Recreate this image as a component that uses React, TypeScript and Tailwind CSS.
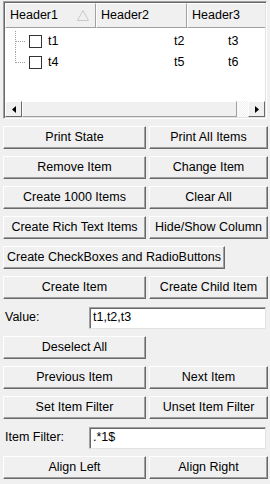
import React from 'react';

const font = { fontFamily: '"Liberation Sans", Arial, sans-serif' };

function Btn({ label, className = '' }: { label: string; className?: string }) {
  return (
    <button
      className={`h-[23px] bg-[#f0f0f0] text-[12.5px] text-black border border-t-white border-l-white border-r-[#696969] border-b-[#696969] shadow-[inset_-1px_-1px_0_#a0a0a0] flex items-center justify-center whitespace-nowrap ${className}`}
    >
      {label}
    </button>
  );
}

function Row({ left, right }: { left: string; right: string }) {
  return (
    <div className="flex gap-[3px]">
      <Btn label={left} className="w-[143px]" />
      <Btn label={right} className="w-[119px]" />
    </div>
  );
}

function Field({ label, value }: { label: string; value: string }) {
  return (
    <div className="flex items-center h-[23px]">
      <span className="w-[86px] pl-[2px] text-[12.5px] text-black">{label}</span>
      <div className="w-[177px] h-[22px] bg-white border border-t-[#a0a0a0] border-l-[#a0a0a0] border-r-[#e3e3e3] border-b-[#e3e3e3] shadow-[inset_1px_1px_0_#696969] flex items-center pl-[3px] text-[12.5px] text-black">
        {value}
      </div>
    </div>
  );
}

function TreeRow({ a, b, c, last }: { a: string; b: string; c: string; last?: boolean }) {
  return (
    <div className="relative flex items-center h-[21px]">
      {/* tree connector */}
      <div
        className={`absolute left-[10px] top-0 w-0 border-l border-dotted border-[#a0a0a0] ${last ? 'h-[11px]' : 'h-[21px]'}`}
      />
      <div className="absolute left-[11px] top-[10px] w-[9px] border-t border-dotted border-[#a0a0a0]" />
      <div className="ml-[24px] w-[13px] h-[13px] border border-[#333] bg-white" />
      <span className="ml-[6px] w-[126px]">{a}</span>
      <span className="w-[54px]">{b}</span>
      <span>{c}</span>
    </div>
  );
}

function Tree() {
  return (
    <div className="ml-[3px] w-[264px] h-[118px] bg-white border border-t-[#a0a0a0] border-l-[#a0a0a0] border-r-white border-b-white shadow-[inset_1px_1px_0_#696969,inset_-1px_-1px_0_#e3e3e3] flex flex-col p-[1px] text-[12.5px] text-black">
      <div className="flex h-[25px] bg-[#f0f0f0] shrink-0">
        <div className="w-[91px] flex items-center justify-between pl-[4px] pr-[6px] border-t border-l border-t-white border-l-white border-r border-b border-r-[#a0a0a0] border-b-[#a0a0a0]">
          <span>Header1</span>
          <svg width="12" height="11" viewBox="0 0 12 11">
            <path d="M0.5 10.5 L6 0.5 L11.5 10.5 Z" fill="none" stroke="#c8c8c8" />
          </svg>
        </div>
        <div className="w-[91px] flex items-center pl-[4px] border-t border-l border-t-white border-l-white border-r border-b border-r-[#a0a0a0] border-b-[#a0a0a0]">
          Header2
        </div>
        <div className="flex-1 flex items-center pl-[4px] border-t border-l border-t-white border-l-white border-b border-b-[#a0a0a0]">
          Header3
        </div>
      </div>
      <div className="flex-1 pt-[3px]">
        <TreeRow a="t1" b="t2" c="t3" />
        <TreeRow a="t4" b="t5" c="t6" last />
      </div>
      <div className="flex h-[16px] shrink-0 bg-[#f0f0f0]">
        <div className="w-[17px] flex items-center justify-center border border-t-white border-l-white border-r-[#696969] border-b-[#696969]">
          <svg width="4" height="7" viewBox="0 0 4 7"><path d="M4 0 L0 3.5 L4 7 Z" fill="black" /></svg>
        </div>
        <div className="w-[215px] border border-t-white border-l-white border-r-[#a0a0a0] border-b-[#a0a0a0]" />
        <div className="flex-1 bg-[repeating-conic-gradient(#f0f0f0_0_25%,#fff_0_50%)] bg-[length:2px_2px]" />
        <div className="w-[17px] flex items-center justify-center border border-t-white border-l-white border-r-[#696969] border-b-[#696969]">
          <svg width="4" height="7" viewBox="0 0 4 7"><path d="M0 0 L4 3.5 L0 7 Z" fill="black" /></svg>
        </div>
      </div>
    </div>
  );
}

export default function App() {
  return (
    <div className="w-[270px] h-[484px] bg-[#f0f0f0] pt-[1px] flex flex-col gap-[7px]" style={font}>
      <Tree />
      <div className="pl-[3px] flex flex-col gap-[7px]">
        <Row left="Print State" right="Print All Items" />
        <Row left="Remove Item" right="Change Item" />
        <Row left="Create 1000 Items" right="Clear All" />
        <Row left="Create Rich Text Items" right="Hide/Show Column" />
        <Btn label="Create CheckBoxes and RadioButtons" className="w-[222px]" />
        <Row left="Create Item" right="Create Child Item" />
        <Field label="Value:" value="t1,t2,t3" />
        <Btn label="Deselect All" className="w-[143px]" />
        <Row left="Previous Item" right="Next Item" />
        <Row left="Set Item Filter" right="Unset Item Filter" />
        <Field label="Item Filter:" value=".*1$" />
        <Row left="Align Left" right="Align Right" />
      </div>
    </div>
  );
}
